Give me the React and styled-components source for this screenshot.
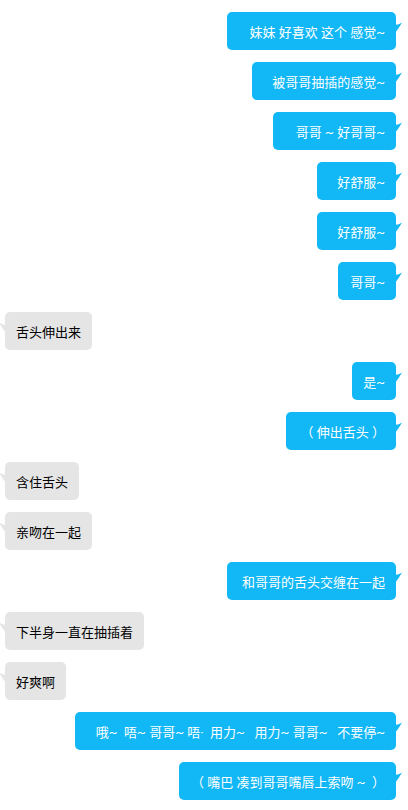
import React from 'react';
import styled, { createGlobalStyle } from 'styled-components';

const GlobalStyle = createGlobalStyle`
  html, body {
    margin: 0;
    padding: 0;
    background: #fff;
  }
  body {
    font-family: Roboto, "Noto Sans CJK SC", sans-serif;
  }
`;

// indent = extra space before the text, as typed in each message
const messages = [
  { me: true, indent: 11, text: '妹妹 好喜欢 这个 感觉~' },
  { me: true, indent: 9, text: '被哥哥抽插的感觉~' },
  { me: true, indent: 12, text: '哥哥 ~ 好哥哥~' },
  { me: true, indent: 9, text: '好舒服~' },
  { me: true, indent: 9, text: '好舒服~' },
  { me: true, indent: 1, text: '哥哥~' },
  { me: false, indent: 0, text: '舌头伸出来' },
  { me: true, indent: 0, text: '是~' },
  { me: true, indent: 4, text: '（ 伸出舌头 ）' },
  { me: false, indent: 0, text: '含住舌头' },
  { me: false, indent: 0, text: '亲吻在一起' },
  { me: true, indent: 4, text: '和哥哥的舌头交缠在一起' },
  { me: false, indent: 0, text: '下半身一直在抽插着' },
  { me: false, indent: 0, text: '好爽啊' },
  { me: true, indent: 10, text: '哦~  唔~ 哥哥~ 唔·  用力~   用力~ 哥哥~   不要停~' },
  { me: true, indent: 1, text: '（ 嘴巴 凑到哥哥嘴唇上索吻 ~  ）' },
];

export default function App() {
  return (
    <>
      <GlobalStyle />
      <ChatList>
        {messages.map((m, i) => (
          <Row key={i} $me={m.me}>
            <Bubble $me={m.me} $indent={m.indent}>
              {m.text}
              <Tail $me={m.me} viewBox="0 0 7 11">
                <path d="M0 3 Q4 2.5 7 0.5 Q4 6 0 11 Z" />
              </Tail>
            </Bubble>
          </Row>
        ))}
      </ChatList>
    </>
  );
}

const ChatList = styled.div`
  display: flex;
  flex-direction: column;
  gap: 12px;
  padding: 12px 12px 10px 5px;
  width: 408px;
  box-sizing: border-box;
`;

const Row = styled.div`
  display: flex;
  justify-content: ${p => (p.$me ? 'flex-end' : 'flex-start')};
`;

const Bubble = styled.div`
  position: relative;
  height: 38px;
  box-sizing: border-box;
  display: flex;
  align-items: center;
  padding: 0 11px 0 ${p => 11 + p.$indent}px;
  border-radius: 5px;
  background: ${p => (p.$me ? '#12b7f5' : '#e5e5e5')};
  color: ${p => (p.$me ? '#fff' : '#000')};
  font-size: 13px;
  white-space: pre;
`;

const Tail = styled.svg`
  position: absolute;
  top: 10px;
  width: 7px;
  height: 11px;
  fill: ${p => (p.$me ? '#12b7f5' : '#e5e5e5')};
  ${p => (p.$me ? 'right: -6px;' : 'left: -6px; transform: scaleX(-1);')}
`;
